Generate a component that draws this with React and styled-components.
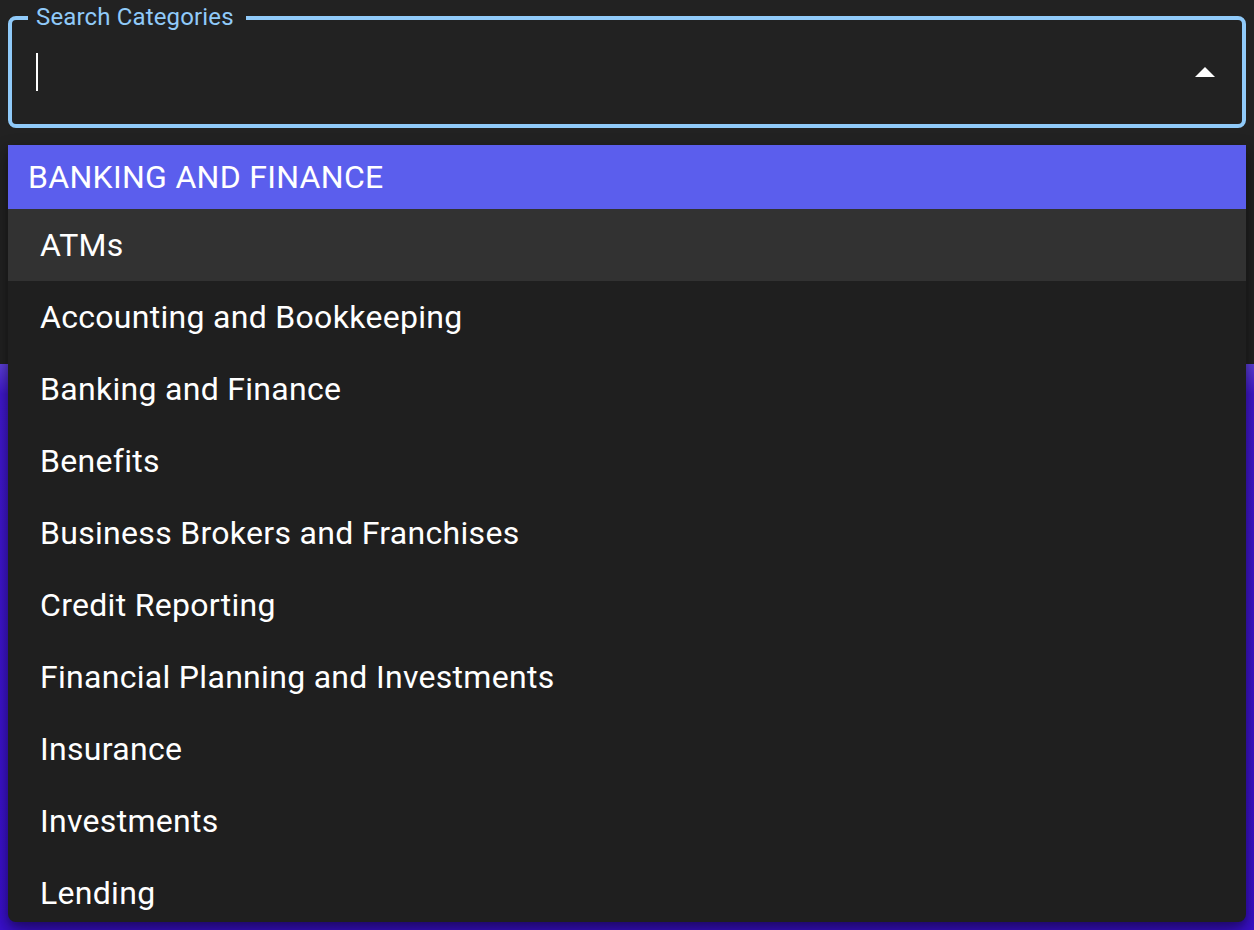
import React from "react";
import styled, { createGlobalStyle } from "styled-components";

const categories = [
  "ATMs",
  "Accounting and Bookkeeping",
  "Banking and Finance",
  "Benefits",
  "Business Brokers and Franchises",
  "Credit Reporting",
  "Financial Planning and Investments",
  "Insurance",
  "Investments",
  "Lending"
];

const GlobalStyle = createGlobalStyle`
  html, body {
    margin: 0;
    padding: 0;
    background: #3a10cc;
  }
  body {
    font-family: Roboto, "Liberation Sans", sans-serif;
  }
`;

const Page = styled.div`
  position: relative;
  display: flex;
  flex-direction: column;
  min-height: 100vh;
`;

const TopPanel = styled.div`
  height: 364px;
  box-sizing: border-box;
  padding: 16px 8px 0;
  background: #222222;
`;

const Main = styled.div`
  flex: 1;
  background: linear-gradient(180deg, #5e40dc 0, #4118cf 30px, #3a10cc 100%);
`;

const Field = styled.div`
  position: relative;
  height: 112px;
  box-sizing: border-box;
  border: 4px solid #90caf9;
  border-radius: 8px;
  display: flex;
  align-items: center;
  padding: 0 27px 0 24px;
`;

const Label = styled.span`
  position: absolute;
  top: -15px;
  left: 16px;
  padding: 0 12px 0 8px;
  background: #222222;
  color: #90caf9;
  font-size: 24px;
  line-height: 24px;
  letter-spacing: 0.15px;
`;

const Caret = styled.span`
  width: 2px;
  height: 38px;
  background: #ffffff;
`;

const Spacer = styled.div`
  flex: 1;
`;

const Arrow = styled.svg`
  width: 20px;
  height: 10px;
  fill: #ffffff;
`;

const Popup = styled.div`
  position: absolute;
  top: 145px;
  left: 8px;
  right: 8px;
  height: 777px;
  overflow: hidden;
  background: #1f1f1f;
  border-radius: 0 0 8px 8px;
  box-shadow: 0 10px 20px rgba(0, 0, 0, 0.35), 0 4px 8px rgba(0, 0, 0, 0.25);
`;

const GroupHeader = styled.div`
  height: 64px;
  display: flex;
  align-items: center;
  padding-left: 20px;
  background: #5b5eed;
  color: #ffffff;
  font-size: 32px;
  letter-spacing: 0.3px;
  text-transform: uppercase;
`;

const Option = styled.div`
  height: 72px;
  flex-shrink: 0;
  display: flex;
  align-items: center;
  padding-left: 32px;
  color: #ffffff;
  font-size: 32px;
  letter-spacing: 0.3px;
  background: ${p => (p.$active ? "#323232" : "transparent")};
`;

const App = () => {
  return (
    <Page>
      <GlobalStyle />
      <TopPanel>
        <Field>
          <Label>Search Categories</Label>
          <Caret />
          <Spacer />
          <Arrow viewBox="0 0 10 5">
            <path d="M0 5 L5 0 L10 5 Z" />
          </Arrow>
        </Field>
      </TopPanel>
      <Main />
      <Popup>
        <GroupHeader>Banking and Finance</GroupHeader>
        {categories.map((name, i) => (
          <Option key={name} $active={i === 0}>
            {name}
          </Option>
        ))}
      </Popup>
    </Page>
  );
};

export default App;
